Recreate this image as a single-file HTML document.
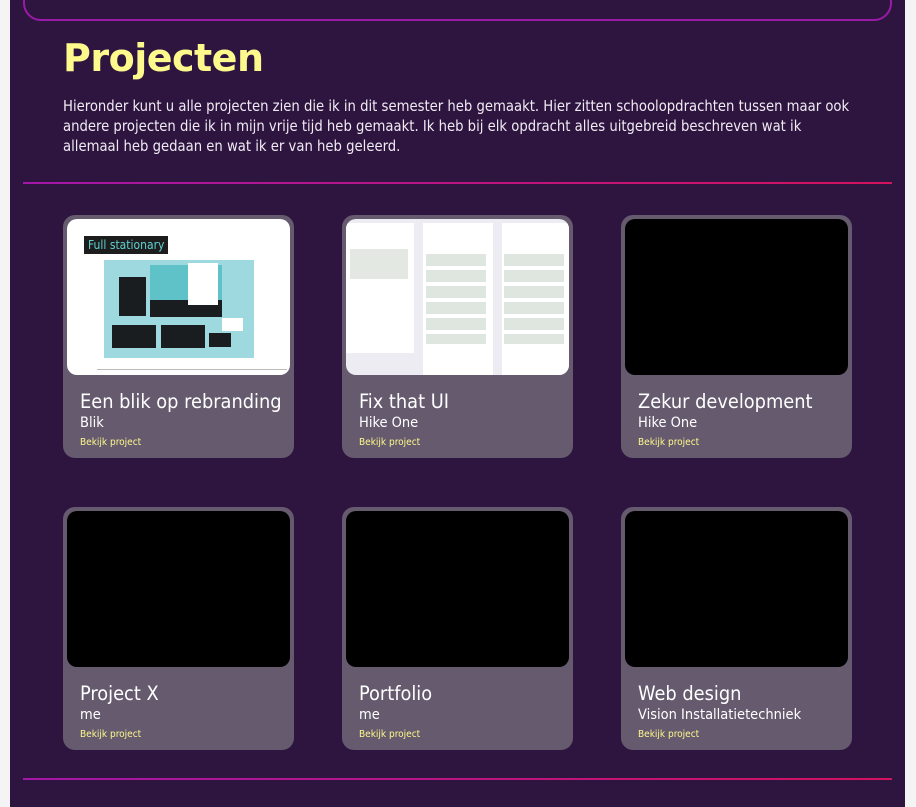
<!DOCTYPE html>
<html><head><style>
*{margin:0;padding:0;box-sizing:border-box}
body{width:916px;height:807px;overflow:hidden;background:#f4f4f4;font-family:"DejaVu Sans Condensed","Liberation Sans",sans-serif}
.main{position:absolute;left:10px;top:0;width:895px;height:807px;background:#2e1540}
.topbox{position:absolute;left:23px;top:-30px;width:869px;height:51px;border:2px solid #9a1aa8;border-radius:18px}
h1{position:absolute;left:63px;top:36px;color:#fdf98c;font-family:"DejaVu Sans","Liberation Sans",sans-serif;font-weight:bold;font-size:38px;letter-spacing:-0.5px}
p.intro{position:absolute;left:63px;top:97px;width:820px;color:#f0eaf2;font-size:14.7px;line-height:20px;white-space:nowrap}
.hr{position:absolute;left:23px;width:869px;height:2px;background:linear-gradient(90deg,#a317a8,#d4125e)}
.card{position:absolute;width:231px;height:243px;background:#665a6e;border-radius:12px}
.img{position:absolute;left:4px;top:4px;width:223px;height:156px;background:#000;border-radius:10px;overflow:hidden}
.t{position:absolute;left:17px;top:175px;color:#fff;font-size:19.8px;white-space:nowrap}
.s{position:absolute;left:17px;top:200px;color:#fff;font-size:14.5px}
.l{position:absolute;left:17px;top:222px;color:#fdf98c;font-size:10px}
</style></head><body>
<div class="main"></div>
<div class="topbox"></div>
<h1>Projecten</h1>
<p class="intro">Hieronder kunt u alle projecten zien die ik in dit semester heb gemaakt. Hier zitten schoolopdrachten tussen maar ook<br>andere projecten die ik in mijn vrije tijd heb gemaakt. Ik heb bij elk opdracht alles uitgebreid beschreven wat ik<br>allemaal heb gedaan en wat ik er van heb geleerd.</p>
<div class="hr" style="top:182px"></div>

<div class="card" style="left:63px;top:215px">
 <div class="img" style="background:#fff">
  <div style="position:absolute;left:17px;top:17px;background:#1d1d1d;color:#5fd0d0;font-size:12px;padding:2px 4px">Full stationary</div>
  <div style="position:absolute;left:37px;top:41px;width:150px;height:98px;background:#9dd9de">
   <div style="position:absolute;left:15px;top:17px;width:27px;height:39px;background:#1a1d20"></div>
   <div style="position:absolute;left:46px;top:5px;width:72px;height:52px;background:#5ec2c8"></div>
   <div style="position:absolute;left:46px;top:40px;width:72px;height:17px;background:#1a1d20"></div>
   <div style="position:absolute;left:84px;top:3px;width:30px;height:42px;background:#fff"></div>
   <div style="position:absolute;left:8px;top:65px;width:44px;height:23px;background:#1a1d20"></div>
   <div style="position:absolute;left:57px;top:65px;width:44px;height:23px;background:#1a1d20"></div>
   <div style="position:absolute;left:105px;top:73px;width:22px;height:14px;background:#1a1d20"></div>
   <div style="position:absolute;left:118px;top:58px;width:21px;height:13px;background:#fff"></div>
  </div>
  <div style="position:absolute;left:30px;top:150px;width:190px;height:1px;background:#bbb"></div>
 </div>
 <div class="t">Een blik op rebranding</div><div class="s">Blik</div><div class="l">Bekijk project</div>
</div>

<div class="card" style="left:342px;top:215px">
 <div class="img" style="background:#ececf2">
  <div style="position:absolute;left:0;top:4px;width:68px;height:130px;background:#fff"></div>
  <div style="position:absolute;left:77px;top:4px;width:70px;height:152px;background:#fff"></div>
  <div style="position:absolute;left:156px;top:4px;width:67px;height:152px;background:#fff"></div>
  <div style="position:absolute;left:80px;top:35px;width:60px;height:90px;background:repeating-linear-gradient(180deg,#dfe6df 0 12px,#fff 12px 16px)"></div>
  <div style="position:absolute;left:158px;top:35px;width:60px;height:90px;background:repeating-linear-gradient(180deg,#dfe6df 0 12px,#fff 12px 16px)"></div>
  <div style="position:absolute;left:4px;top:30px;width:58px;height:30px;background:#e3e8e3"></div>
 </div>
 <div class="t">Fix that UI</div><div class="s">Hike One</div><div class="l">Bekijk project</div>
</div>

<div class="card" style="left:621px;top:215px"><div class="img"></div>
 <div class="t">Zekur development</div><div class="s">Hike One</div><div class="l">Bekijk project</div></div>

<div class="card" style="left:63px;top:507px"><div class="img"></div>
 <div class="t">Project X</div><div class="s">me</div><div class="l">Bekijk project</div></div>
<div class="card" style="left:342px;top:507px"><div class="img"></div>
 <div class="t">Portfolio</div><div class="s">me</div><div class="l">Bekijk project</div></div>
<div class="card" style="left:621px;top:507px"><div class="img"></div>
 <div class="t">Web design</div><div class="s">Vision Installatietechniek</div><div class="l">Bekijk project</div></div>

<div class="hr" style="top:778px"></div>
</body></html>
